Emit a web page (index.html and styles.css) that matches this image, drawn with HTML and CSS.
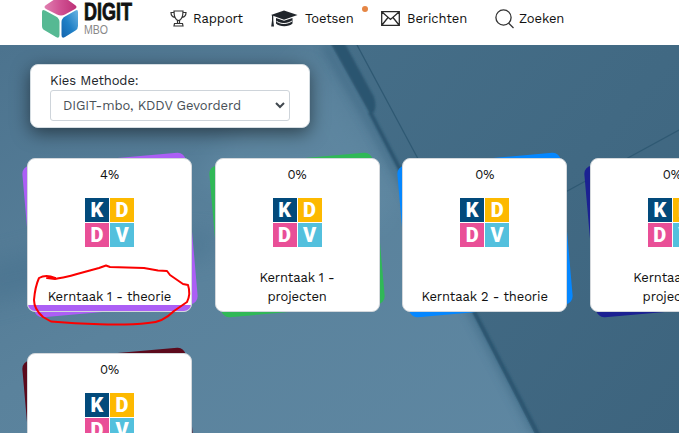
FILE: index.html
```html
<!DOCTYPE html>
<html lang="nl">
<head>
<meta charset="utf-8">
<title>DIGIT-mbo</title>
<link rel="stylesheet" href="styles.css">
</head>
<body>
<header class="topbar">
  <a class="brand">
    <svg class="cube" width="38" height="42" viewBox="0 0 38 42">
      <defs>
        <linearGradient id="pink" x1="0" y1="0" x2="1" y2="0"><stop offset="0" stop-color="#e07fb0"/><stop offset=".5" stop-color="#d05092"/><stop offset="1" stop-color="#bd3177"/></linearGradient>
        <linearGradient id="blue" x1="1" y1="0" x2="0" y2="1"><stop offset="0" stop-color="#6cb4e2"/><stop offset=".55" stop-color="#1f7fc6"/><stop offset="1" stop-color="#1464ae"/></linearGradient>
      </defs>
      <path d="M4 9 L16 1 Q19 -1 22 1 L33 9 Q36 11 33 13 L23 18.500 Q19 20.500 15 18.500 L4 13 Q1 11 4 9Z" fill="url(#pink)"/>
      <path d="M3 14.500 L14 20.500 Q17.500 22.500 17.500 26 V39 Q17.500 43 14 41 L3 34.500 Q0 33 0 30 V16 Q0 13 3 14.500Z" fill="#56b993"/>
      <path d="M33.500 14.500 L23 20.500 Q19.500 22.500 19.500 26 V39 Q19.500 43 23 41 L33.500 34.500 Q36 33 36 30 V16 Q36 13 33.500 14.500Z" fill="url(#blue)"/>
    </svg>
    <svg class="wordmark" width="52" height="42" viewBox="0 0 52 42">
      <text class="word-main" x="0" y="24" textLength="48" lengthAdjust="spacingAndGlyphs">DIGIT</text>
      <text class="word-sub" x="0" y="37.5" textLength="24" lengthAdjust="spacingAndGlyphs">MBO</text>
    </svg>
  </a>
  <nav class="nav">
    <a class="item rapport">
      <svg width="17" height="17" viewBox="0 0 17 17" fill="none" stroke="#333" stroke-width="1.2">
        <path d="M4 1 H13 C13 7 12 10 8.500 10.500 C5 10 4 7 4 1Z M4 2.500 H1 C1 5.500 2.500 7 5 7.500 M13 2.500 H16 C16 5.500 14.500 7 12 7.500 M7.500 10.500 V13.500 M9.500 10.500 V13.500 M4.500 13.500 H12.500 L13 16 H4Z"/>
      </svg>
      <span>Rapport</span>
    </a>
    <a class="item toetsen">
      <svg width="28" height="18" viewBox="0 0 28 18" fill="#20252b">
        <path d="M14 0.500 L27.500 5 L14 9.800 L1 5Z"/>
        <path d="M6 8 L14 10.800 L22.500 8 V13.500 C19 17 9.500 17 6 13.500Z"/>
        <path d="M2 5 H3.300 V10.500 L4 16.500 H1.200 L2 10.500Z"/>
        <path d="M6.500 11.300 C11 14.300 17 14.300 22 11" fill="none" stroke="#fff" stroke-width="1"/>
      </svg>
      <span>Toetsen</span><i class="dot"></i>
    </a>
    <a class="item berichten">
      <svg width="19" height="15" viewBox="0 0 19 15" fill="none" stroke="#292929" stroke-width="1.3">
        <path d="M.7 .7 H18.300 V14.300 H.7Z M1 1 L9.500 8.500 L18 1 M1 14 L7 6.500 M18 14 L12 6.500"/>
      </svg>
      <span>Berichten</span>
    </a>
    <a class="item zoeken">
      <svg width="19" height="20" viewBox="0 0 19 20" fill="none" stroke="#333" stroke-width="1.3">
        <circle cx="8.500" cy="8.500" r="7.600"/><path d="M13.500 14 L18.500 19"/>
      </svg>
      <span>Zoeken</span>
    </a>
  </nav>
</header>

<main class="page">
  <svg class="backdrop" width="679" height="388" viewBox="0 45 679 388" aria-hidden="true">
    <defs>
      <linearGradient id="sea" x1="0" y1="0" x2="1" y2="1"><stop offset="0" stop-color="#4c738e"/><stop offset=".45" stop-color="#5a829c"/><stop offset="1" stop-color="#5f88a3"/></linearGradient>
      <linearGradient id="slab" x1="0" y1="0" x2="1" y2="1"><stop offset="0" stop-color="#456e88"/><stop offset="1" stop-color="#3d647e"/></linearGradient>
      <filter id="soft" x="-30%" y="-30%" width="160%" height="160%"><feGaussianBlur stdDeviation="12"/></filter>
      <filter id="edge" x="-10%" y="-10%" width="120%" height="120%"><feGaussianBlur stdDeviation=".8"/></filter>
      <filter id="shade" x="-30%" y="-10%" width="160%" height="120%"><feGaussianBlur stdDeviation="5"/></filter>
    </defs>
    <rect y="45" width="679" height="388" fill="url(#sea)"/>
    <path d="M-20 265 C50 250 110 225 220 235 L210 255 C110 270 40 290 -20 305Z" fill="#416c89" opacity=".4" filter="url(#soft)"/>
    <path d="M190 180 L310 45 L400 200 L360 240Z" fill="#6c95ae" opacity=".3" filter="url(#soft)"/>
    <path d="M325 45 L372 125 L536 433" fill="none" stroke="#315d79" stroke-width="8" opacity=".5" filter="url(#shade)"/>
    <path d="M331 45 L370 113 L538 440 H679 V45Z" fill="url(#slab)"/>
    <path d="M329 40 H343 L374 97 Q377 106 374 112 L370 114Z" fill="#2b556f" filter="url(#edge)"/>
    <path d="M370 112 L541 440" fill="none" stroke="#2b556f" stroke-width="4" filter="url(#edge)"/>
    <path d="M357 45 L424 170 M560 195 L679 130" fill="none" stroke="#2f5973" stroke-width="1.300"/>
  </svg>

  <section class="method">
    <label class="method-label" for="methode">Kies Methode:</label>
    <div class="select" id="methode">
      <span>DIGIT-mbo, KDDV Gevorderd</span>
      <svg width="10" height="7" viewBox="0 0 10 7" fill="none" stroke="#41484f" stroke-width="2"><path d="M1 1 L5 5 L9 1"/></svg>
    </div>
  </section>

  <section class="cards">
    <article class="card purple">
      <div class="face"><span class="pct">4%</span><div class="logo"><b>K</b><b>D</b><b>D</b><b>V</b></div><h2>Kerntaak 1 - theorie</h2><div class="progress"></div></div>
      <svg class="marker" width="160" height="62" viewBox="30 264 160 62"><path d="M47 278 L55 279 C64 277 69 277 77 274 L99 268 L106 265.500 L110 267 L144 268 L158 270.500 L167 271 L170 275 L183 284 L188 285 Q191 294 187 302 L174 311 Q162 323 148 323 C122 326 78 324 51 321.500 L43 317 Q34 309 34 300 Q35 287 39 278 Q46 274 55 278"/></svg>
    </article>
    <article class="card green">
      <div class="face"><span class="pct">0%</span><div class="logo"><b>K</b><b>D</b><b>D</b><b>V</b></div><h2>Kerntaak 1 -<br>projecten</h2></div>
    </article>
    <article class="card azure">
      <div class="face"><span class="pct">0%</span><div class="logo"><b>K</b><b>D</b><b>D</b><b>V</b></div><h2>Kerntaak 2 - theorie</h2></div>
    </article>
    <article class="card navy">
      <div class="face"><span class="pct">0%</span><div class="logo"><b>K</b><b>D</b><b>D</b><b>V</b></div><h2>Kerntaak 2 -<br>projecten</h2></div>
    </article>
    <article class="card maroon">
      <div class="face"><span class="pct">0%</span><div class="logo"><b>K</b><b>D</b><b>D</b><b>V</b></div></div>
    </article>
  </section>
</main>
</body>
</html>
```
FILE: styles.css
```css
* { box-sizing: border-box; }
body {
  margin: 0;
  width: 679px;
  height: 433px;
  overflow: hidden;
  font: 13px/19px "Work Sans", Inter, sans-serif;
  letter-spacing: -.1px;
  color: #212529;
}
svg { display: block; flex: none; }
.topbar {
  display: flex;
  height: 45px;
  padding-left: 42px;
  background: #fff;
}
.brand { display: flex; width: 128px; height: 42px; letter-spacing: 0; }
.brand svg { margin-top: -4px; }
.brand .cube { margin-right: 4px; height: 42px; }
.wordmark { overflow: visible; }
.word-main { font: 700 23px "Liberation Sans", sans-serif; fill: #111; stroke: #111; stroke-width: .8px; }
.word-sub { font: 12px "Liberation Sans", sans-serif; fill: #888; }
.nav { display: flex; height: 37px; align-items: center; color: #111; }
.item { position: relative; display: flex; align-items: center; }
.item span { white-space: nowrap; }
.rapport { width: 100px; gap: 6px; }
.toetsen { width: 111px; gap: 7px; }
.berichten { width: 114px; gap: 7px; }
.zoeken { gap: 5px; }
.dot {
  position: absolute;
  left: 92px;
  top: -3px;
  width: 6px;
  height: 6px;
  border-radius: 50%;
  background: #e58645;
}
.page {
  position: relative;
  height: 388px;
  padding: 19px 0 0 27px;
  overflow: hidden;
}
.backdrop { position: absolute; inset: 0; }
.method {
  position: relative;
  width: 280px;
  height: 64px;
  margin-left: 3px;
  padding: 6px 19px 0;
  border: 1px solid #d5dde2;
  border-radius: 8px;
  background: #fff;
  box-shadow: 0 5px 18px rgba(0, 0, 0, .5);
}
.method-label { display: block; }
.select {
  display: flex;
  align-items: center;
  justify-content: space-between;
  height: 31px;
  padding: 0 4px 0 12px;
  border: 1px solid #ced4da;
  border-radius: 3px;
  color: #495057;
}
.cards {
  display: grid;
  grid-template-columns: repeat(4, 165px);
  gap: 41px 22.6px;
  margin-top: 30px;
}
.card { position: relative; height: 154px; }
.card::before {
  content: "";
  position: absolute;
  inset: 1px .5px;
  border-radius: 8px;
  background: var(--accent);
  transform: rotate(-5deg);
}
.purple { --accent: #ac5ff5; }
.green { --accent: #30b857; }
.azure { --accent: #0587ff; }
.navy { --accent: #1b2192; }
.maroon { --accent: #5c0a1c; }
.face {
  position: relative;
  display: flex;
  flex-direction: column;
  align-items: center;
  height: 154px;
  padding: 6px 0 5px;
  border: 1px solid #d4d8dc;
  border-radius: 8px;
  background: #fff;
  overflow: hidden;
}
.logo {
  display: grid;
  grid-template: 24px 24px / 24px 24px;
  gap: 1px;
  margin-top: 14px;
  font: 700 20px/24px Roboto, sans-serif;
  letter-spacing: 0;
  text-align: center;
  color: #fff;
}
.logo b:nth-child(1) { background: #024a7b; }
.logo b:nth-child(2) { background: #fdb900; }
.logo b:nth-child(3) { background: #e94f97; }
.logo b:nth-child(4) { background: #53c0dd; }
.card h2 {
  margin: auto 0 0;
  font: inherit;
  text-align: center;
  color: #111;
}
.pct { color: #111; }
.progress {
  position: absolute;
  left: 0;
  right: 0;
  bottom: 0;
  height: 6px;
  background: var(--accent);
}
.marker { position: absolute; left: 3px; top: 106px; overflow: visible; }
.marker path { fill: none; stroke: #fb0000; stroke-width: 2; stroke-linejoin: round; stroke-linecap: round; }
```
